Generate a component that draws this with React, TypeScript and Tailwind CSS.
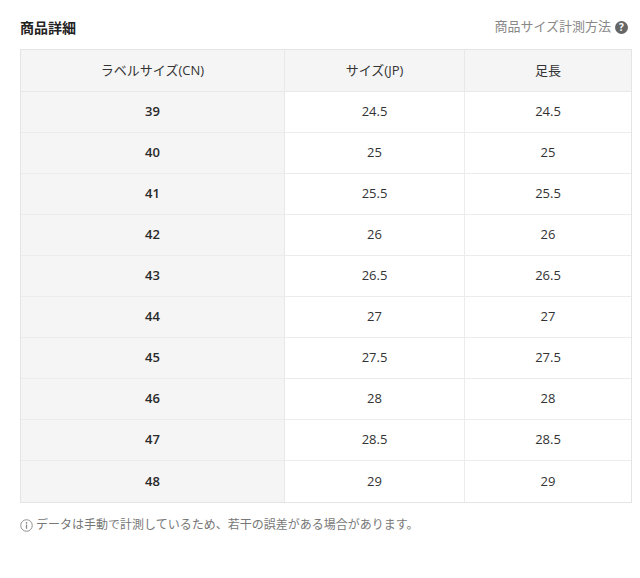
const ROWS: [string, string, string][] = [
  ["39", "24.5", "24.5"],
  ["40", "25", "25"],
  ["41", "25.5", "25.5"],
  ["42", "26", "26"],
  ["43", "26.5", "26.5"],
  ["44", "27", "27"],
  ["45", "27.5", "27.5"],
  ["46", "28", "28"],
  ["47", "28.5", "28.5"],
  ["48", "29", "29"],
];

const FONT = {
  fontFamily: '"Open Sans", "Noto Sans CJK JP", sans-serif',
};

export default function App() {
  return (
    <div
      className="w-[640px] h-[578px] bg-white px-5 pt-[17px] text-[#333]"
      style={FONT}
    >
      <div className="flex items-center justify-between h-5">
        <h2 className="text-[14px] font-bold text-[#222]">商品詳細</h2>
        <a className="flex items-center gap-1 text-[13px] text-[#888] -mr-[8px]">
          商品サイズ計測方法
          <span className="w-[13px] h-[13px] rounded-full bg-[#666] text-white text-[10px] font-bold leading-[13px] text-center">
            ?
          </span>
        </a>
      </div>

      {/* サイズ表 */}
      <div className="mt-3 w-[612px] border border-[#e4e4e4] text-[13px]">
        <div className="grid grid-cols-[264px_180px_1fr] h-[42px] bg-[#f5f5f5] border-b border-[#e8e8e8]">
          <div className="flex items-center justify-center border-r border-[#e8e8e8]">
            ラベルサイズ(CN)
          </div>
          <div className="flex items-center justify-center border-r border-[#e8e8e8]">
            サイズ(JP)
          </div>
          <div className="flex items-center justify-center">足長</div>
        </div>
        {ROWS.map((r, i) => (
          <div
            key={r[0]}
            className={
              i < ROWS.length - 1
                ? "grid grid-cols-[264px_180px_1fr] h-[41px] border-b border-[#ececec]"
                : "grid grid-cols-[264px_180px_1fr] h-[41px]"
            }
          >
            <div className="flex items-center justify-center bg-[#f5f5f5] border-r border-[#e8e8e8] font-semibold text-[#2a2a2a]">
              {r[0]}
            </div>
            <div className="flex items-center justify-center border-r border-[#ececec]">
              {r[1]}
            </div>
            <div className="flex items-center justify-center">{r[2]}</div>
          </div>
        ))}
      </div>

      <p className="mt-[13px] flex items-center gap-[3px] text-[12px] text-[#777]">
        <svg width="13" height="13" viewBox="0 0 14 14" fill="none">
          <circle cx="7" cy="7" r="6.2" stroke="#888" strokeWidth="1" />
          <circle cx="7" cy="4.2" r="0.9" fill="#888" />
          <rect x="6.3" y="6" width="1.4" height="4.5" fill="#888" />
        </svg>
        データは手動で計測しているため、若干の誤差がある場合があります。
      </p>
    </div>
  );
}
